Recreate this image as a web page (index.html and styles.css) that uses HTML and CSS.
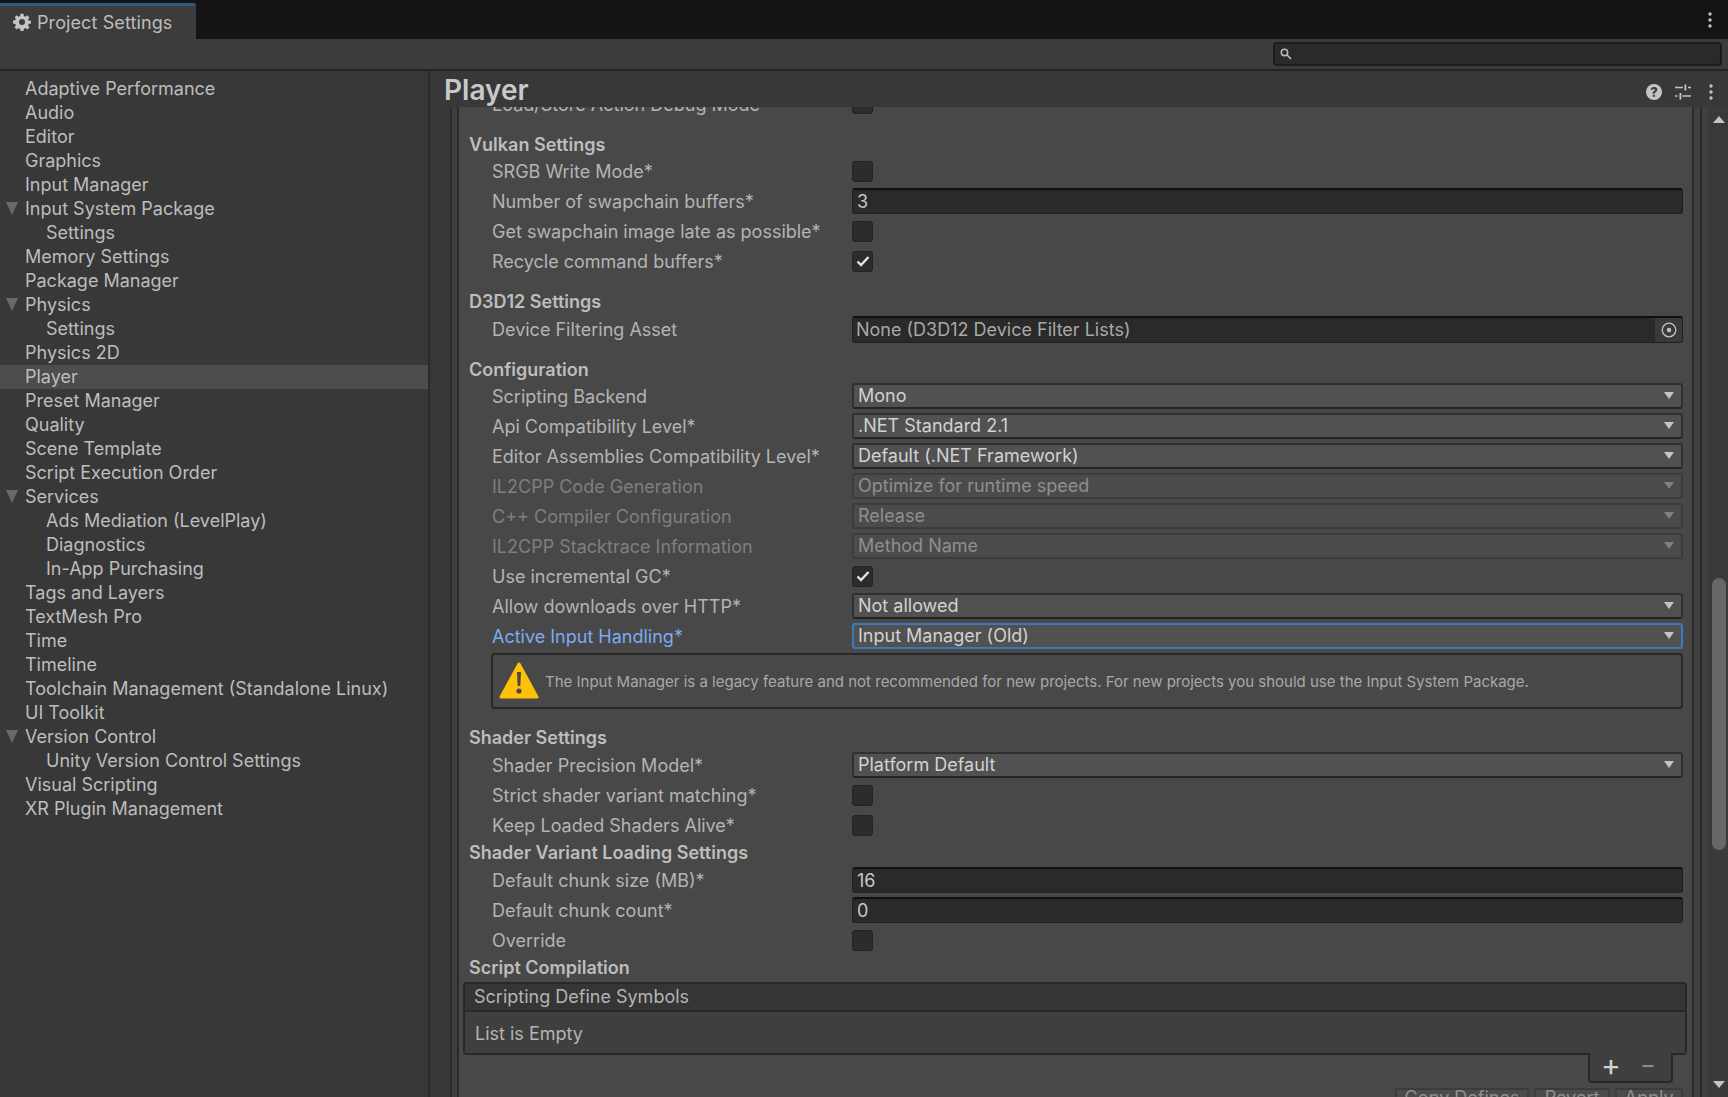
FILE: index.html
```html
<!DOCTYPE html>
<html lang="en">
<head>
<meta charset="utf-8">
<title>Project Settings</title>
<link rel="stylesheet" href="styles.css">
</head>
<body>
<div class="app">
  <div class="tabbar">
    <div class="tab">
      <svg class="gear" viewBox="0 0 24 24"><path fill="#c4c4c4" fill-rule="evenodd" d="M10 1h4l.6 3.1 1.9.8L19.1 3.1l2.8 2.8-1.8 2.6.8 1.9L24 10v4l-3.1.6-.8 1.9 1.8 2.6-2.8 2.8-2.6-1.8-1.9.8L14 24h-4l-.6-3.1-1.9-.8-2.6 1.8-2.8-2.8 1.8-2.6-.8-1.9L0 14v-4l3.1-.6.8-1.9L2.1 5.9l2.8-2.8 2.6 1.8 1.9-.8zM12 8a4 4 0 1 0 0 8 4 4 0 0 0 0-8z"/></svg>
      <span>Project Settings</span>
    </div>
    <svg class="kebab top-kebab" viewBox="0 0 4 16"><circle cx="2" cy="2" r="1.7"/><circle cx="2" cy="8" r="1.7"/><circle cx="2" cy="14" r="1.7"/></svg>
  </div>
  <div class="toolbar">
    <div class="search">
      <svg class="search-icon" viewBox="0 0 12 12"><circle cx="4.5" cy="4.5" r="3.2" fill="none" stroke="#bdbdbd" stroke-width="1.5"/><path d="M7 7l4 4" stroke="#bdbdbd" stroke-width="1.7"/></svg>
    </div>
  </div>
  <div class="main">
    <nav class="sidebar">
      <div class="item">Adaptive Performance</div>
      <div class="item">Audio</div>
      <div class="item">Editor</div>
      <div class="item">Graphics</div>
      <div class="item">Input Manager</div>
      <div class="item parent"><i class="tri"></i>Input System Package</div>
      <div class="item child">Settings</div>
      <div class="item">Memory Settings</div>
      <div class="item">Package Manager</div>
      <div class="item parent"><i class="tri"></i>Physics</div>
      <div class="item child">Settings</div>
      <div class="item">Physics 2D</div>
      <div class="item selected">Player</div>
      <div class="item">Preset Manager</div>
      <div class="item">Quality</div>
      <div class="item">Scene Template</div>
      <div class="item">Script Execution Order</div>
      <div class="item parent"><i class="tri"></i>Services</div>
      <div class="item child">Ads Mediation (LevelPlay)</div>
      <div class="item child">Diagnostics</div>
      <div class="item child">In-App Purchasing</div>
      <div class="item">Tags and Layers</div>
      <div class="item">TextMesh Pro</div>
      <div class="item">Time</div>
      <div class="item">Timeline</div>
      <div class="item">Toolchain Management (Standalone Linux)</div>
      <div class="item">UI Toolkit</div>
      <div class="item parent"><i class="tri"></i>Version Control</div>
      <div class="item child">Unity Version Control Settings</div>
      <div class="item">Visual Scripting</div>
      <div class="item">XR Plugin Management</div>
    </nav>
    <section class="pane">
      <header class="pane-head">
        <h1>Player</h1>
        <div class="head-icons">
          <span class="help">?</span>
          <svg class="sliders" viewBox="0 0 16 16"><path d="M0 3.5h8M13 3.5h3M0 12h2.5M7.5 12h8.5" stroke="#c4c4c4" stroke-width="1.5" fill="none"/><path d="M9.5 0.5h1.8v6H9.5zM4.5 9h1.8v6.500H4.500z" fill="#c4c4c4"/></svg>
          <svg class="kebab" viewBox="0 0 4 16"><circle cx="2" cy="2" r="1.7"/><circle cx="2" cy="8" r="1.700"/><circle cx="2" cy="14" r="1.700"/></svg>
        </div>
      </header>
      <div class="pane-body">
        <div class="gutter"></div>
        <div class="content">
          <div class="row clipped"><label>Load/Store Action Debug Mode</label><div class="check"></div></div>

          <h2 class="gap13 lower">Vulkan Settings</h2>
          <div class="row"><label>SRGB Write Mode*</label><div class="check"></div></div>
          <div class="row"><label>Number of swapchain buffers*</label><div class="input">3</div></div>
          <div class="row"><label>Get swapchain image late as possible*</label><div class="check"></div></div>
          <div class="row"><label>Recycle command buffers*</label><div class="check on"><svg viewBox="0 0 14 12"><path d="M1.500 6.500l3.500 3.500 7.500-8" fill="none" stroke="#e4e4e4" stroke-width="2.400"/></svg></div></div>

          <h2 class="gap13">D3D12 Settings</h2>
          <div class="row"><label>Device Filtering Asset</label><div class="input object"><span class="dim">None (D3D12 Device Filter Lists)</span><span class="picker"><svg viewBox="0 0 16 16"><circle cx="8" cy="8" r="6.800" fill="none" stroke="#c4c4c4" stroke-width="1.300"/><circle cx="8" cy="8" r="2.200" fill="#c4c4c4"/></svg></span></div></div>

          <h2 class="gap12 lower">Configuration</h2>
          <div class="row"><label>Scripting Backend</label><div class="drop">Mono<i></i></div></div>
          <div class="row"><label>Api Compatibility Level*</label><div class="drop">.NET Standard 2.1<i></i></div></div>
          <div class="row"><label>Editor Assemblies Compatibility Level*</label><div class="drop">Default (.NET Framework)<i></i></div></div>
          <div class="row off"><label>IL2CPP Code Generation</label><div class="drop">Optimize for runtime speed<i></i></div></div>
          <div class="row off"><label>C++ Compiler Configuration</label><div class="drop">Release<i></i></div></div>
          <div class="row off"><label>IL2CPP Stacktrace Information</label><div class="drop">Method Name<i></i></div></div>
          <div class="row"><label>Use incremental GC*</label><div class="check on"><svg viewBox="0 0 14 12"><path d="M1.500 6.500l3.500 3.500 7.500-8" fill="none" stroke="#e4e4e4" stroke-width="2.400"/></svg></div></div>
          <div class="row"><label>Allow downloads over HTTP*</label><div class="drop">Not allowed<i></i></div></div>
          <div class="row focus"><label>Active Input Handling*</label><div class="drop">Input Manager (Old)<i></i></div></div>

          <div class="warning">
            <svg viewBox="0 0 40 40"><path d="M20 3L38 36H2z" fill="#ffc107" stroke="#ffc107" stroke-width="3" stroke-linejoin="round"/><path d="M18 11h4l-.7 14h-2.600z" fill="#484848"/><circle cx="20" cy="30" r="2.600" fill="#484848"/></svg>
            <span>The Input Manager is a legacy feature and not recommended for new projects. For new projects you should use the Input System Package.</span>
          </div>

          <h2 class="gap16">Shader Settings</h2>
          <div class="row"><label>Shader Precision Model*</label><div class="drop">Platform Default<i></i></div></div>
          <div class="row"><label>Strict shader variant matching*</label><div class="check"></div></div>
          <div class="row"><label>Keep Loaded Shaders Alive*</label><div class="check"></div></div>

          <h2>Shader Variant Loading Settings</h2>
          <div class="row"><label>Default chunk size (MB)*</label><div class="input">16</div></div>
          <div class="row"><label>Default chunk count*</label><div class="input">0</div></div>
          <div class="row"><label>Override</label><div class="check"></div></div>

          <h2>Script Compilation</h2>
          <div class="list">
            <div class="list-head">Scripting Define Symbols</div>
            <div class="list-body">List is Empty</div>
          </div>
          <div class="list-foot-wrap">
            <div class="list-foot"><span class="plus">+</span><span class="minus">−</span></div>
          </div>
          <div class="actions">
            <button class="copy">Copy Defines</button>
            <button class="revert">Revert</button>
            <button class="apply">Apply</button>
          </div>
        </div>
        <div class="rstrip"></div>
        <div class="scrollbar">
          <i class="arrow-up"></i>
          <div class="thumb"></div>
          <i class="arrow-down"></i>
        </div>
      </div>
    </section>
  </div>
</div>
</body>
</html>
```
FILE: styles.css
```css
* { box-sizing: border-box; }
html, body { margin: 0; height: 100%; overflow: hidden; }
body { background: #383838; color: #bdbdbd; font-family: Inter, "Noto Sans", sans-serif; font-size: 18px; }
.app { display: flex; flex-direction: column; width: 1728px; height: 1097px; overflow: hidden; }

.tabbar { height: 39px; flex: none; background: #141414; display: flex; align-items: stretch; justify-content: space-between; }
.tab { width: 196px; margin-top: 3px; background: #3c3c3c; border-top: 3px solid #2c5d87; border-top-right-radius: 3px; display: flex; align-items: center; gap: 6px; padding-left: 13px; color: #bcbcbc; padding-bottom: 1px; letter-spacing: 0.1px; }
.gear { width: 18px; height: 18px; flex: none; }
.kebab { width: 4px; height: 16px; fill: #c4c4c4; flex: none; }
.top-kebab { align-self: center; margin-right: 16px; }

.toolbar { height: 32px; flex: none; background: #3c3c3c; border-bottom: 2px solid #232323; display: flex; justify-content: flex-end; padding: 3px 6px 0 0; }
.search { width: 449px; height: 24px; background: #2a2a2a; border: 2px solid #1b1b1b; border-radius: 4px; display: flex; align-items: center; padding-left: 5px; }
.search-icon { width: 12px; height: 12px; }

.main { flex: 1; display: flex; min-height: 0; }
.sidebar { width: 430px; flex: none; background: #383838; border-right: 2px solid #2a2a2a; padding-top: 6px; }
.item { height: 24px; line-height: 23px; padding-left: 25px; color: #bdbdbd; white-space: nowrap; }
.item.child { padding-left: 46px; }
.item.selected { background: #4d4d4d; }
.item.parent { padding-left: 6px; display: flex; align-items: flex-start; }
.tri { width: 0; height: 0; border-left: 6.5px solid transparent; border-right: 6.5px solid transparent; border-top: 13px solid #686868; margin: 5px 7px 0 0; flex: none; }

.pane { flex: 1; min-width: 0; display: flex; flex-direction: column; }
.pane-head { height: 36px; flex: none; background: #383838; display: flex; justify-content: space-between; align-items: center; padding-left: 14px; position: relative; z-index: 2; }
h1 { margin: 0 0 -1px; font-size: 28px; font-weight: 600; line-height: 36px; color: #c9c9c9; }
.head-icons { display: flex; align-items: center; padding: 6px 15px 0 0; }
.help { width: 16px; height: 16px; border-radius: 50%; background: #c4c4c4; color: #383838; font-size: 13px; font-weight: 800; line-height: 16px; text-align: center; margin-right: 13px; }
.sliders { width: 16px; height: 16px; margin-right: 18px; }

.pane-body { flex: 1; min-height: 0; display: flex; }
.gutter { width: 29px; flex: none; background: #3e3e3e; border-left: 20px solid #383838; border-right: 2px solid #2a2a2a; }
.gutter::before { content: ""; display: block; width: 2px; height: 100%; background: #2a2a2a; }
.content { flex: 1; min-width: 0; background: #484848; padding: 0 9px 0 10px; overflow: hidden; }
.rstrip { width: 16px; flex: none; background: #404040; border-left: 2px solid #2a2a2a; }
.rstrip::before { content: ""; display: block; width: 2px; height: 100%; margin-left: 6px; background: #2a2a2a; }
.scrollbar { width: 20px; flex: none; background: #3a3a3a; display: flex; flex-direction: column; align-items: flex-start; padding: 9px 0 9px 4px; }
.arrow-up { width: 0; height: 0; margin-left: 1px; border-left: 6px solid transparent; border-right: 6px solid transparent; border-bottom: 7px solid #c4c4c4; flex: none; }
.arrow-down { width: 0; height: 0; margin: auto 0 0 1px; border-left: 6px solid transparent; border-right: 6px solid transparent; border-top: 7px solid #c4c4c4; flex: none; }
.thumb { width: 14px; height: 272px; margin-top: 455px; border-radius: 7px; background: #676767; flex: none; }

h2 { margin: 0; height: 25px; line-height: 25px; font-size: 18px; font-weight: 600; color: #bdbdbd; }
h2.lower { line-height: 27px; }
.gap12 { margin-top: 12px; }
.gap13 { margin-top: 13px; }
.gap16 { margin-top: 16px; }

.row { display: grid; grid-template-columns: 360px 1fr; height: 30px; align-items: center; padding-left: 23px; }
.row.clipped { margin-top: -19px; }
.row.clipped label { padding-top: 3px; }
.row label { color: #b4b4b4; white-space: nowrap; }
.row.off label { color: #7f7f7f; }
.row.focus label { color: #7babf0; }

.check { width: 21px; height: 21px; background: #2c2c2c; border: 1px solid #232323; border-radius: 3px; display: flex; align-items: center; justify-content: center; }
.check svg { width: 14px; height: 12px; }
.input { height: 26px; background: #2a2a2a; border: 1px solid #212121; border-top: 2px solid #0f0f0f; border-radius: 3px; color: #c8c8c8; line-height: 24px; padding-left: 4px; display: flex; }
.input.object { height: 27px; padding-left: 3px; justify-content: space-between; }
.dim { color: #a8a8a8; }
.picker { width: 27px; background: #3a3a3a; display: flex; align-items: center; justify-content: center; border-radius: 0 2px 2px 0; }
.picker svg { width: 16px; height: 16px; }
.drop { height: 26px; background: #515151; border: 2px solid #303030; border-bottom-color: #242424; border-radius: 3px; color: #d2d2d2; line-height: 20px; padding: 0 7px 1px 4px; display: flex; justify-content: space-between; align-items: center; }
.drop i { width: 0; height: 0; border-left: 5.5px solid transparent; border-right: 5.5px solid transparent; border-top: 7px solid #c4c4c4; flex: none; }
.off .drop { background: #4b4b4b; border-color: #3c3c3c; color: #8f8f8f; }
.off .drop i { border-top-color: #808080; }
.focus .drop { border-color: #3a79bb; }

.warning { height: 56px; margin: 2px 0 0 22px; border: 2px solid #282828; border-radius: 4px; display: flex; align-items: center; padding-left: 6px; gap: 6px; color: #a8a8a8; font-size: 15px; white-space: nowrap; }
.warning svg { width: 40px; height: 40px; flex: none; }

.list { margin: 2px -4px 0 -6px; border: 2px solid #282828; border-radius: 4px; }
.list-head { height: 28px; line-height: 26px; background: #353535; border-bottom: 2px solid #282828; padding-left: 9px; color: #b4b4b4; }
.list-body { height: 41px; line-height: 44px; background: #3f3f3f; padding-left: 10px; color: #b4b4b4; }
.list-foot-wrap { display: flex; justify-content: flex-end; margin: -2px 10px 0 0; position: relative; }
.list-foot { width: 85px; height: 30px; background: #3f3f3f; border: 2px solid #282828; border-top: 0; border-radius: 0 0 4px 4px; display: flex; align-items: center; padding-bottom: 4px; }
.plus { width: 40px; text-align: center; padding-left: 2px; color: #d2d2d2; font-size: 30px; line-height: 26px; }
.minus { width: 36px; text-align: center; color: #8a8a8a; font-size: 24px; line-height: 26px; }
.actions { display: flex; justify-content: flex-end; gap: 5px; margin-top: 5px; }
.actions button { font: inherit; height: 20px; line-height: 16px; background: #4b4b4b; border: 2px solid #3c3c3c; border-radius: 3px; color: #8f8f8f; padding: 0; overflow: visible; }
.copy { width: 134px; }
.revert { width: 76px; }
.apply { width: 68px; }
```
